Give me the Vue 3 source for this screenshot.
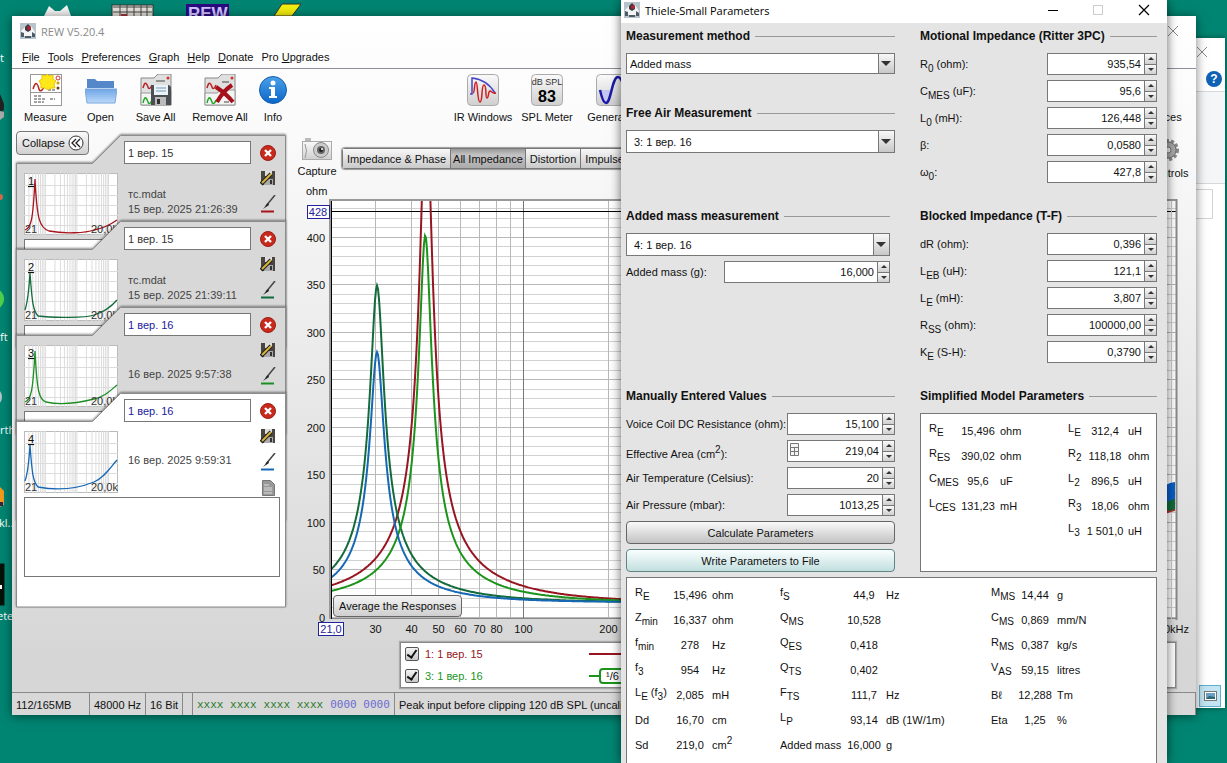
<template>
  <div class="desktop">
    <!-- Desktop shortcuts that peek out from behind the windows -->
    <svg class="shortcuts-top" width="320" height="16" aria-hidden="true">
      <path d="M44 16 L49 6 L55 11 L60 11 L67 5 L71 16 Z" fill="#f4f4f4" />
      <rect x="112" y="5" width="41" height="12" fill="#e4e0da" stroke="#333" />
      <path d="M113 7h39M113 12h39M120 5v11M127 5v11M134 5v11M141 5v11M147 5v11" stroke="#444" />
      <path d="M121 15h6" stroke="#a33" stroke-width="2" />
      <rect x="186" y="4" width="43" height="12" fill="#2b0a80" />
      <text x="188" y="19" class="rew-logo">REW</text>
      <path d="M282 4 L301 4 L292 16 L274 16 Z" fill="#f4ee10" stroke="#333" />
    </svg>
    <svg class="shortcuts-left" width="12" height="640" aria-hidden="true">
      <path d="M0 94v18l4-2v-6z" fill="#222" />
      <path d="M0 111l4 1v5l-4 3z" fill="#aaa" />
      <circle cx="0" cy="197" r="3" fill="#d2694a" />
      <circle cx="-7" cy="299" r="11" fill="#4fd04a" />
      <circle cx="-8" cy="397" r="10" fill="#b9c4c8" />
      <path d="M0 487l4 4v14l-4 2z" fill="#f49a1c" />
      <path d="M0 502h3v4h-3z" fill="#222a55" />
      <rect x="-2" y="564" width="6" height="41" fill="#061206" stroke="#111" />
      <rect x="0" y="585" width="2" height="4" fill="#fff" />
      <text x="0" y="62">t</text>
      <text x="0" y="341">ft</text>
      <text x="-6" y="434">arth</text>
      <text x="-1" y="527">kl...</text>
      <text x="-3" y="620">ete</text>
    </svg>

    <!-- Window at the very back -->
    <div class="back-window">
      <div class="back-title">
        <svg width="12" height="12"><path d="M1 1l10 10M11 1L1 11" stroke="#888" /></svg>
      </div>
      <div class="back-help">
        <svg width="16" height="16">
          <circle cx="8" cy="8" r="8" fill="#0f62b4" />
          <text x="8" y="12" text-anchor="middle" class="help-mark">?</text>
        </svg>
      </div>
      <div class="back-ribbon"></div>
      <div class="back-body"><div class="back-box"></div></div>
      <div class="back-view">
        <svg width="22" height="22">
          <rect x="0.5" y="0.5" width="21" height="21" fill="#c3e5f3" stroke="#5fb0cf" />
          <rect x="5.5" y="6.5" width="12" height="9" fill="#fff" stroke="#777" />
          <path d="M7 8h9v6H7z" fill="#6b9fc4" />
          <path d="M7 14l3-3 6 1v2z" fill="#2d6674" />
        </svg>
      </div>
    </div>

    <!-- REW main window -->
    <div class="rew">
      <div class="rew-title">
        <svg class="duke" width="16" height="16" viewBox="0 0 16 16"><path d="M0 0h16v16H0z" fill="#b8c4cc" /><path d="M1 8l5-5 5 0 4 6-1 4H2z" fill="#f4f4f4" /><path d="M5 4l3-3 3 3v3l-3 2-3-2z" fill="#363b42" /><circle cx="9" cy="5" r="2" fill="#b3232f" /><path d="M1 9l3 1v4H1zM12 9l3 2v3h-3zM5 13h6v2H5z" fill="#4d5b66" /></svg>
        <span>REW V5.20.4</span>
        <svg class="rew-close" width="12" height="12"><path d="M1 1l10 10M11 1L1 11" stroke="#888" /></svg>
      </div>

      <div class="menubar">
        <a v-for="item in menu" :key="item[1]" href="#">{{ item[0] }}<u>{{ item[1] }}</u>{{ item[2] }}</a>
      </div>

      <div class="toolbar">
        <button class="tool">
          <svg width="32" height="32">
            <rect x="0.5" y="0.5" width="31" height="18" fill="#fff" stroke="#999" />
            <rect x="0.5" y="18.500" width="31" height="13" fill="#fff" stroke="#999" />
            <path d="M3 15c3-10 5-4 6 0s4 1 6-4" fill="none" stroke="#b22" stroke-width="1.5" />
            <path d="M18 16h8M4 22h8M4 25h12M20 25h5M4 28h10" stroke="#444" stroke-dasharray="3 1" />
            <circle cx="28" cy="4" r="2" fill="none" stroke="#c33" /><circle cx="28" cy="9" r="1.5" fill="#c90" /><circle cx="28" cy="14" r="1.5" fill="#642" />
            <path d="M17 0l2 2 4-1 0 4 3 2-2 3 1 4-4 0-3 2-3-2-4 0 0-4-2-3 3-2 0-4 4 1z" fill="#ffe81a" stroke="#e8c400" />
          </svg>
          Measure
        </button>
        <button class="tool">
          <svg width="32" height="32">
            <defs><linearGradient id="folder" x2="0" y2="1"><stop stop-color="#6ea5e6" /><stop offset="1" stop-color="#bcd9f9" /></linearGradient></defs>
            <path d="M2 14V5h8l2 2h17v7z" fill="#5588c9" /><path d="M0 15h32l-2 14H2z" fill="url(#folder)" stroke="#7aa8e0" />
          </svg>
          Open
        </button>
        <button class="tool">
          <svg width="32" height="32">
            <path d="M1 4h13l4-4h13v31H1z" fill="#e0e0e0" stroke="#888" /><path d="M1 19h12l4-3h14v15H1z" fill="#f4f4f4" stroke="#999" />
            <path d="M3 14c2-8 4-4 5-1s3 1 4-2" fill="none" stroke="#b22" stroke-width="1.5" />
            <path d="M3 29c2-9 4-4 5-1s3 1 4-2" fill="none" stroke="#2a2" stroke-width="1.5" />
            <path d="M16 7h9" stroke="#444" /><circle cx="28" cy="4" r="1.5" fill="#c33" />
            <path d="M11 11h18l2 2v18H11z" fill="#4b4f55" /><path d="M14 11h14v10H14z" fill="#eaf2fa" /><path d="M16 14h10M16 17h10" stroke="#79a" /><path d="M15 23h11v8H15z" fill="#bbb" /><path d="M17 25h3v5h-3z" fill="#333" />
          </svg>
          Save All
        </button>
        <button class="tool">
          <svg width="32" height="32">
            <path d="M1 4h13l4-4h13v31H1z" fill="#e0e0e0" stroke="#888" /><path d="M1 19h12l4-3h14v15H1z" fill="#f4f4f4" stroke="#999" />
            <path d="M3 14c2-8 4-4 5-1s3 1 4-2" fill="none" stroke="#b22" stroke-width="1.5" />
            <path d="M3 29c2-9 4-4 5-1s3 1 4-2" fill="none" stroke="#2a2" stroke-width="1.5" />
            <path d="M18 8h7M20 28h5" stroke="#444" /><circle cx="28" cy="4" r="1.5" fill="#c33" />
            <path d="M12 13c6 4 12 9 17 15M28 11c-6 4-11 10-15 17" fill="none" stroke="#a5101a" stroke-width="4" />
          </svg>
          Remove All
        </button>
        <button class="tool">
          <svg width="32" height="32">
            <defs><linearGradient id="info" x2="0" y2="1"><stop stop-color="#4aa0e8" /><stop offset="1" stop-color="#0b66c8" /></linearGradient></defs>
            <circle cx="16" cy="16" r="13.5" fill="url(#info)" stroke="#1560ad" />
            <circle cx="16" cy="9" r="2.5" fill="#fff" /><path d="M12 13h6v9h2v2h-8v-2h2v-7h-2z" fill="#fff" />
          </svg>
          Info
        </button>
        <span></span>
        <button class="tool">
          <svg width="32" height="32">
            <rect x="0.5" y="0.5" width="31" height="31" rx="4" fill="url(#tile)" stroke="#aaa" />
            <path d="M3 20h2V4c10 1 17 5 23 15" fill="none" stroke="#4646c8" stroke-width="1.5" />
            <path d="M6 19c2 0 1-11 3-11s1 20 4 20 1-17 4-17 1 13 3 13 1-7 3-7 2 3 6 2" fill="none" stroke="#d01c1c" stroke-width="1.5" />
          </svg>
          IR Windows
        </button>
        <button class="tool">
          <svg width="32" height="32">
            <defs><linearGradient id="tile" x2="0" y2="1"><stop stop-color="#fafafa" /><stop offset="1" stop-color="#cfcfcf" /></linearGradient></defs>
            <rect x="0.5" y="0.5" width="31" height="31" rx="4" fill="url(#tile)" stroke="#aaa" />
            <text x="16" y="11" text-anchor="middle" class="spl-small">dB SPL</text>
            <text x="16" y="28" text-anchor="middle" class="spl-big">83</text>
          </svg>
          SPL Meter
        </button>
        <button class="tool">
          <svg width="32" height="32">
            <rect x="0.5" y="0.5" width="31" height="31" rx="4" fill="url(#tile)" stroke="#aaa" />
            <path d="M4 16h12c-2 8-4 13-6 13s-4-5-6-13z" fill="#c4c8f0" />
            <path d="M4 16c2 9 4 13 6 13 5 0 6-26 12-26 3 0 5 6 7 13" fill="none" stroke="#1a1aa8" stroke-width="2.5" />
          </svg>
          Generator
        </button>
        <span></span>
        <button class="tool">
          <svg width="32" height="32"><rect x="4" y="4" width="24" height="24" fill="#bbb" /></svg>
          Preferences
        </button>
      </div>

      <div class="workspace">
        <!-- Measurement list -->
        <aside class="sidebar">
          <button class="collapse">
            Collapse
            <svg width="16" height="16"><circle cx="8" cy="8" r="7" fill="#fff" stroke="#333" /><path d="M8 4L4 8l4 4M12 4L8 8l4 4" fill="none" stroke="#222" stroke-width="1.3" /></svg>
          </button>
          <div v-for="m in measurements" :key="m.id" class="card">
            <svg class="card-shape" width="270" height="215">
              <path d="M0.5 214V28.5H76.5L104.5 0.5H269.5V214Z" :fill="m.active ? '#ffffff' : '#d8d8d8'" stroke="#8c8c8c" />
            </svg>
            <div class="card-grid">
              <svg class="thumb" width="94" height="62">
                <rect x="0.5" y="0.5" width="93" height="61" fill="#fff" stroke="#bbb" />
                <path :d="thumbGrid" stroke="#dcdcdc" />
                <path :d="m.curve" fill="none" :stroke="m.color" stroke-width="1.3" />
                <text x="4" y="12" class="thumb-id">{{ m.id }}</text>
                <text x="1" y="60">21</text>
                <text x="67" y="60">20,0k</text>
              </svg>
              <div class="card-main">
                <input v-model="m.name" :class="{ blue: m.blue }" aria-label="Name" />
                <div class="card-info">
                  <span v-if="m.file">{{ m.file }}</span>
                  <span>{{ m.date }}</span>
                </div>
              </div>
              <div class="card-icons">
                <svg width="16" height="16"><circle cx="8" cy="8" r="7.5" fill="#c8291c" stroke="#9c2016" /><path d="M5 5l6 6M11 5l-6 6" stroke="#fff" stroke-width="2.4" /></svg>
                <svg width="16" height="16"><path d="M1 1h14v14H3l-2-2z" fill="#4a4540" /><path d="M5 1h7v5H5z" fill="#ddd" /><path d="M4 9h9v6H4z" fill="#aaa" /><path d="M10 10h2v4h-2z" fill="#333" /><path d="M1 14L11 4" stroke="#222" stroke-width="4" /><path d="M2 13L11 4" stroke="#d8b53a" stroke-width="2" /></svg>
                <svg width="16" height="18"><path d="M15 0L6 11" stroke="#444" stroke-width="1.5" /><path d="M8 8l-5 6 6-4z" fill="#222" /><path d="M1 16.500h13" :stroke="m.color" stroke-width="2" /></svg>
                <svg width="16" height="16"><path d="M2.500 0.500h8l4 4v11h-12z" fill="#999" stroke="#777" /><path d="M4 5h5M4 8h8M4 10h8M4 13h8" stroke="#ddd" /></svg>
              </div>
            </div>
            <textarea class="notes" aria-label="Notes"></textarea>
          </div>
        </aside>

        <main class="graph">
          <div class="graph-top">
            <button class="capture">
              <svg width="32" height="22">
                <rect x="1.500" y="3.500" width="29" height="18" fill="url(#tile)" stroke="#aaa" />
                <rect x="4" y="0" width="6" height="3" fill="#bbb" />
                <path d="M4 6q3 7 0 14" fill="none" stroke="#999" />
                <circle cx="20" cy="12" r="7.500" fill="#ccc" stroke="#888" /><circle cx="20" cy="12" r="4" fill="#666" /><circle cx="20" cy="12" r="2" fill="#222" /><circle cx="21" cy="11" r="1" fill="#fff" />
              </svg>
              Capture
            </button>
            <div class="tabs">
              <button v-for="t in tabs" :key="t" :class="{ on: t === currentTab }" @click="currentTab = t">{{ t }}</button>
            </div>
            <button class="capture controls">
              <svg width="24" height="24"><circle cx="12" cy="12" r="9" fill="#bbb" stroke="#888" stroke-width="4" stroke-dasharray="3 2" /><circle cx="12" cy="12" r="8" fill="#aaa" stroke="#777" /><circle cx="12" cy="12" r="3" fill="#eee" stroke="#777" /></svg>
              Controls
            </button>
          </div>

          <!-- Impedance chart, log frequency axis -->
          <div class="chart-wrap">
            <svg class="chart" width="100%" height="454">
              <text x="6" y="10">ohm</text>
              <svg x="31" y="16" height="418" class="plot">
                <rect width="100%" height="417" fill="#fff" />
                <line v-for="v in minorY" :key="'m' + v" x1="0" x2="100%" :y1="yPos(v)" :y2="yPos(v)" stroke="#d2d2d2" />
                <line v-for="v in majorY" :key="'y' + v" x1="0" x2="100%" :y1="yPos(v)" :y2="yPos(v)" stroke="#b8b8b8" />
                <line v-for="f in gridX" :key="'x' + f" :x1="xPos(f)" :x2="xPos(f)" y1="0" y2="417" :stroke="f === 100 ? '#777' : '#b8b8b8'" />
                <line x1="0" x2="100%" y1="10.500" y2="10.500" stroke="#000" />
                <path v-for="c in curves" :key="c.color" :d="c.path" fill="none" :stroke="c.color" stroke-width="2" />
                <rect y="417" width="100%" height="1" fill="#888" />
              </svg>
              <path d="M31.500 16V434" stroke="#000" stroke-width="1" />
              <path d="M30 14V434" stroke="#999" stroke-width="2" />
              <svg x="29" y="14" height="2" class="plot top-edge"><rect width="100%" height="2" fill="#999" /></svg>
              <svg x="100%" y="0" width="1" height="454" class="edge">
                <path d="M-24.500 16V434" stroke="#ccc" />
                <path d="M-36 322h15v4l-4 1-3 1-4 1-4-2z" fill="#c03028" />
                <path d="M-36 314h15v10l-4 2-5-1-6 1z" fill="#136b3c" />
                <path d="M-36 301l6-1 4-2 5-1v17l-4 1-4 2-7 1z" fill="#0a5ec8" />
                <path d="M-19.500 14V435" stroke="#888" stroke-width="2" />
                <text x="-7" y="448" text-anchor="end">20,0kHz</text>
              </svg>
              <text v-for="v in majorY" :key="'t' + v" x="25" :y="yPos(v) + 20" text-anchor="end">{{ v }}</text>
              <text v-for="f in labelsX" :key="'l' + f" :x="xPos(f) + 31" y="448" text-anchor="middle">{{ f }}</text>
              <rect x="7.500" y="20.500" width="22" height="13" fill="#fff" stroke="#22229a" />
              <text x="18" y="31" text-anchor="middle" class="marker">428</text>
              <rect x="18.500" y="437.500" width="25" height="13" fill="#fff" stroke="#22229a" />
              <text x="31" y="448" text-anchor="middle" class="marker">21,0</text>
            </svg>
            <button class="average">Average the Responses</button>
          </div>

          <div class="legend">
            <label class="red">
              <input v-model="shown" type="checkbox" value="1" />
              <span>1: 1 вер. 15</span>
              <svg width="60" height="20"><path d="M0 10h60" stroke="#961520" stroke-width="2" /></svg>
            </label>
            <label class="green">
              <input v-model="shown" type="checkbox" value="3" />
              <span>3: 1 вер. 16</span>
              <svg width="60" height="20"><path d="M0 10h12" stroke="#1c941c" stroke-width="2" /><rect x="11" y="3" width="40" height="14" rx="3" fill="#fff" stroke="#1c941c" stroke-width="2" /><text x="17" y="14" class="smooth">¹/6</text></svg>
            </label>
          </div>
        </main>
      </div>

      <footer class="status">
        <span>112/165MB</span>
        <span>48000 Hz</span>
        <span>16 Bit</span>
        <span></span>
        <span class="bits"><i>xxxx xxxx</i><i>xxxx xxxx</i><b>0000 0000</b></span>
        <span>Peak input before clipping 120 dB SPL (uncalibrated)</span>
      </footer>
    </div>

    <!-- Thiele-Small dialog -->
    <div class="dialog">
      <div class="dialog-title">
        <svg class="duke" width="16" height="16" viewBox="0 0 16 16"><path d="M0 0h16v16H0z" fill="#b8c4cc" /><path d="M1 8l5-5 5 0 4 6-1 4H2z" fill="#f4f4f4" /><path d="M5 4l3-3 3 3v3l-3 2-3-2z" fill="#363b42" /><circle cx="9" cy="5" r="2" fill="#b3232f" /><path d="M1 9l3 1v4H1zM12 9l3 2v3h-3zM5 13h6v2H5z" fill="#4d5b66" /></svg>
        <span>Thiele-Small Parameters</span>
        <svg class="dialog-buttons" width="102" height="12">
          <path d="M0 6.500h10" stroke="#000" /><rect x="45.500" y="1.500" width="9" height="9" fill="none" stroke="#ccc" /><path d="M91 1l10 10M101 1L91 11" stroke="#000" stroke-width="1.200" />
        </svg>
      </div>

      <div class="params">
        <section>
          <h2>Measurement method</h2>
          <div class="combo">
            <select aria-label="Measurement method"><option>Added mass</option></select>
          </div>
          <h2 class="second">Free Air Measurement</h2>
          <div class="combo tall">
            <select aria-label="Free Air Measurement"><option>3: 1 вер. 16</option></select>
          </div>
        </section>

        <section>
          <h2>Motional Impedance (Ritter 3PC)</h2>
          <div v-for="(f, i) in motional" :key="i" class="field">
            <label :for="'mot' + i">{{ f.name }}<sub>{{ f.sub }}</sub>{{ f.unit }}</label>
            <div class="spinner">
              <input :id="'mot' + i" v-model="f.value" />
              <span class="steps"><button aria-label="Up"></button><button aria-label="Down" class="down"></button></span>
            </div>
          </div>
        </section>

        <section class="added">
          <h2>Added mass measurement</h2>
          <div class="combo tall">
            <select aria-label="Added mass measurement"><option>4: 1 вер. 16</option></select>
          </div>
          <div class="field">
            <label for="mass">Added mass (g):</label>
            <div class="spinner wide">
              <input id="mass" v-model="addedMass" />
              <span class="steps"><button aria-label="Up"></button><button aria-label="Down" class="down"></button></span>
            </div>
          </div>
        </section>

        <section>
          <h2>Blocked Impedance (T-F)</h2>
          <div v-for="(f, i) in blocked" :key="i" class="field">
            <label :for="'blk' + i">{{ f.name }}<sub>{{ f.sub }}</sub>{{ f.unit }}</label>
            <div class="spinner">
              <input :id="'blk' + i" v-model="f.value" />
              <span class="steps"><button aria-label="Up"></button><button aria-label="Down" class="down"></button></span>
            </div>
          </div>
        </section>

        <section>
          <h2>Manually Entered Values</h2>
          <div v-for="(f, i) in manual" :key="i" class="field">
            <label :for="'man' + i" :class="{ raised: f.sup }">{{ f.name }}<sup v-if="f.sup">{{ f.sup }}</sup>{{ f.unit }}</label>
            <div class="spinner narrow">
              <svg v-if="f.calc" class="calc" width="10" height="14"><path d="M0.500 0.500h8v12h-8zM0.500 4.500h8M0.500 8.500h8M4.500 4.500v8" fill="#f4f4f4" stroke="#777" /></svg>
              <input :id="'man' + i" v-model="f.value" />
              <span class="steps"><button aria-label="Up"></button><button aria-label="Down" class="down"></button></span>
            </div>
          </div>
          <button class="action">Calculate Parameters</button>
          <button class="action write">Write Parameters to File</button>
        </section>

        <section class="simple">
          <h2>Simplified Model Parameters</h2>
          <div class="panel">
            <table>
              <colgroup><col class="w27" /><col class="w44" /><col class="w68" /><col class="w14" /><col class="w46" /><col /></colgroup>
              <tbody>
                <tr v-for="(row, r) in simplified" :key="r">
                  <template v-for="(c, i) in row" :key="i">
                    <td class="symbol">{{ c[0] }}<sub>{{ c[1] }}</sub></td>
                    <td class="num">{{ c[2] }}</td>
                    <td>{{ c[3] }}</td>
                  </template>
                </tr>
              </tbody>
            </table>
          </div>
        </section>
      </div>

      <div class="panel results">
        <table>
          <colgroup><col class="w33" /><col class="w44" /><col class="w68" /><col class="w62" /><col class="w44" /><col class="w105" /><col class="w22" /><col class="w44" /><col /></colgroup>
          <tbody>
            <tr v-for="(row, r) in results" :key="r">
              <template v-for="(c, i) in row" :key="i">
                <td :class="{ symbol: c[1] }">{{ c[0] }}<sub v-if="c[1]">{{ c[1] }}</sub><template v-if="c[4]"> ({{ c[4] }}<sub>3</sub>)</template></td>
                <td class="num">{{ c[2] }}</td>
                <td>{{ c[3] }}<sup v-if="c[5]">{{ c[5] }}</sup></td>
              </template>
            </tr>
          </tbody>
        </table>
      </div>
    </div>
  </div>
</template>

<script setup>
import { ref } from 'vue'

const menu = [
  ['', 'F', 'ile'], ['', 'T', 'ools'], ['', 'P', 'references'], ['', 'G', 'raph'],
  ['', 'H', 'elp'], ['', 'D', 'onate'], ['Pro ', 'U', 'pgrades']
]

const tabs = ['Impedance & Phase', 'All Impedance', 'Distortion', 'Impulse', 'Group Delay']
const currentTab = ref('All Impedance')
const shown = ref(['1', '3'])
const addedMass = ref('16,000')

const measurements = ref([
  { id: 1, name: '1 вер. 15', file: 'тс.mdat', date: '15 вер. 2025 21:26:39', color: '#a8141c', curve: 'M1 57C7 55 9 48 11 6C13 48 16 55 25 58C40 61 62 60 70 57C80 55 86 52 93 47' },
  { id: 2, name: '1 вер. 15', file: 'тс.mdat', date: '15 вер. 2025 21:39:11', color: '#116b3a', curve: 'M1 51C4 42 5 30 6 14C8 42 9 52 14 57C28 59 62 59 70 56C80 53 87 48 93 41' },
  { id: 3, name: '1 вер. 16', blue: true, date: '16 вер. 2025 9:57:38', color: '#1b8f22', curve: 'M1 57C7 55 9 46 11 6C13 46 15 55 22 57C40 61 62 56 70 54C80 52 86 46 93 40' },
  { id: 4, name: '1 вер. 16', blue: true, active: true, date: '16 вер. 2025 9:59:31', color: '#1668b4', curve: 'M1 50C4 42 5 30 6 14C8 42 9 51 14 56C30 59 50 59 70 51C80 47 86 37 93 29' }
])

// Log frequency lines of the thumbnails, 21 Hz - 20 kHz over 94 px
let grid = 'M0 12.500h94M0 22.500h94M0 32.500h94M0 42.500h94M0 52.500h94'
for (let d = 10; d < 20000; d *= 10) {
  for (let n = 1; n < 10; n++) {
    const f = d * n
    if (f > 21 && f < 20000) grid += `M${(Math.log10(f / 21) / Math.log10(20000 / 21) * 94).toFixed(1)} 0V62`
  }
}
const thumbGrid = grid

// Chart axes
const xPos = f => Math.round(282.4 * Math.log10(f / 100) + 192) + 0.5
const yPos = v => Math.round(417 - v * 0.951) - 0.5
const majorY = [0, 50, 100, 150, 200, 250, 300, 350, 400]
const minorY = Array.from({ length: 44 }, (_, i) => i * 10).filter(v => v % 50)
const gridX = [30, 40, 50, 60, 70, 80, 90, 100, 200, 300, 400, 500]
const labelsX = [30, 40, 50, 60, 70, 80, 100, 200]

// |Re + Rm / (1 + jQx)| of a driver around its resonance
function impedance(fs, rm, q) {
  let path = ''
  for (let px = 0; px <= 420; px++) {
    const f = 100 * Math.pow(10, (px - 192.5) / 282.4)
    const k = q * (f / fs - fs / f)
    const re = 16.5 + rm / (1 + k * k)
    const im = rm * k / (1 + k * k)
    path += `${px ? 'L' : 'M'}${px} ${(417 - Math.sqrt(re * re + im * im) * 0.951).toFixed(1)}`
  }
  return path
}

const curves = [
  { color: '#961520', path: impedance(45.2, 530, 10.6) },
  { color: '#136b3c', path: impedance(30.3, 333, 9.3) },
  { color: '#1c941c', path: impedance(44.9, 386, 10.2) },
  { color: '#1668b4', path: impedance(30.3, 263, 9.2) }
]

const motional = ref([
  { name: 'R', sub: '0', unit: ' (ohm):', value: '935,54' },
  { name: 'C', sub: 'MES', unit: ' (uF):', value: '95,6' },
  { name: 'L', sub: '0', unit: ' (mH):', value: '126,448' },
  { name: 'β:', sub: '', unit: '', value: '0,0580' },
  { name: 'ω', sub: '0', unit: ':', value: '427,8' }
])

const blocked = ref([
  { name: 'dR (ohm):', sub: '', unit: '', value: '0,396' },
  { name: 'L', sub: 'EB', unit: ' (uH):', value: '121,1' },
  { name: 'L', sub: 'E', unit: ' (mH):', value: '3,807' },
  { name: 'R', sub: 'SS', unit: ' (ohm):', value: '100000,00' },
  { name: 'K', sub: 'E', unit: ' (S-H):', value: '0,3790' }
])

const manual = ref([
  { name: 'Voice Coil DC Resistance (ohm):', value: '15,100' },
  { name: 'Effective Area (cm', sup: '2', unit: '):', value: '219,04', calc: true },
  { name: 'Air Temperature (Celsius):', value: '20' },
  { name: 'Air Pressure (mbar):', value: '1013,25' }
])

// [symbol, subscript, value, unit]
const simplified = [
  [['R', 'E', '15,496', 'ohm'], ['L', 'E', '312,4', 'uH']],
  [['R', 'ES', '390,02', 'ohm'], ['R', '2', '118,18', 'ohm']],
  [['C', 'MES', '95,6', 'uF'], ['L', '2', '896,5', 'uH']],
  [['L', 'CES', '131,23', 'mH'], ['R', '3', '18,06', 'ohm']],
  [['', '', '', ''], ['L', '3', '1 501,0', 'uH']]
]

const results = [
  [['R', 'E', '15,496', 'ohm'], ['f', 'S', '44,9', 'Hz'], ['M', 'MS', '14,44', 'g']],
  [['Z', 'min', '16,337', 'ohm'], ['Q', 'MS', '10,528', ''], ['C', 'MS', '0,869', 'mm/N']],
  [['f', 'min', '278', 'Hz'], ['Q', 'ES', '0,418', ''], ['R', 'MS', '0,387', 'kg/s']],
  [['f', '3', '954', 'Hz'], ['Q', 'TS', '0,402', ''], ['V', 'AS', '59,15', 'litres']],
  [['L', 'E', '2,085', 'mH', 'f'], ['F', 'TS', '111,7', 'Hz'], ['Bℓ', '', '12,288', 'Tm']],
  [['Dd', '', '16,70', 'cm'], ['L', 'P', '93,14', 'dB (1W/1m)'], ['Eta', '', '1,25', '%']],
  [['Sd', '', '219,0', 'cm', '', '2'], ['Added mass', '', '16,000', 'g']]
]
</script>

<style>
body {
  margin: 0;
  background: #008572;
}
</style>

<style scoped>
.desktop {
  position: relative;
  height: 100vh;
  min-height: 720px;
  overflow: hidden;
  background: #008572;
  font: 11px/14px "Liberation Sans", Arial, sans-serif;
  color: #111;
}

.desktop * {
  box-sizing: border-box;
}

button, input, select, textarea {
  font: inherit;
  color: inherit;
  margin: 0;
}

svg {
  display: block;
  flex: none;
}

.shortcuts-top, .shortcuts-left {
  position: absolute;
  top: 0;
  left: 0;
}

.shortcuts-left text {
  font: 11px "Open Sans", sans-serif;
  fill: #fff;
}

.rew-logo {
  font: bold 17px "Liberation Sans", sans-serif;
  fill: #cfc4ff;
}

/* back window */
.back-window {
  position: absolute;
  top: 38px;
  right: 2px;
  width: 70px;
  background: #fff;
  box-shadow: 0 0 6px rgba(0, 0, 0, 0.4);
}

.back-title {
  height: 30px;
  padding: 8px 0 0 41px;
}

.back-help {
  height: 24px;
  padding: 3px 0 0 51px;
  border-bottom: 1px solid #d8d8d8;
}

.help-mark {
  font: bold 12px "Liberation Sans", sans-serif;
  fill: #fff;
}

.back-ribbon {
  height: 92px;
  background: #f4f6f7;
  border-bottom: 1px solid #d8d8d8;
}

.back-body {
  height: 501px;
  padding-top: 5px;
}

.back-box {
  width: 58px;
  height: 30px;
  border: 1px solid #d4d4d4;
}

.back-view {
  height: 23px;
  padding-left: 44px;
}

/* main window */
.rew {
  position: absolute;
  top: 16px;
  left: 12px;
  right: 31px;
  background: linear-gradient(#fff 0, #fafafa 120px, #d6d6d6 640px, #d6d6d6 100%);
  box-shadow: 0 1px 10px rgba(0, 0, 0, 0.5);
}

.rew-title {
  display: flex;
  align-items: center;
  height: 30px;
  padding: 0 17px 0 8px;
  gap: 5px;
  font: 11px "Open Sans", sans-serif;
  color: #8a8a8a;
}

.rew-close {
  margin-left: auto;
}

.menubar {
  display: flex;
  gap: 8px;
  height: 23px;
  padding: 4px 10px 0;
  border-bottom: 1px solid #8e8e98;
}

.menubar a {
  color: #111;
  text-decoration: none;
}

.toolbar {
  display: grid;
  grid-template-columns: 55px 55px 55px 74px 32px 161px 66px 62px 68px 1fr 64px;
  height: 62px;
  padding: 5px 12px 0 6px;
}

.tool, .capture {
  display: flex;
  flex-direction: column;
  align-items: center;
  gap: 4px;
  padding: 0;
  border: 0;
  background: none;
  white-space: nowrap;
}

.spl-small {
  font: 9px "Liberation Sans", sans-serif;
  fill: #333;
}

.spl-big {
  font: bold 16px "Liberation Sans", sans-serif;
}

.workspace {
  display: flex;
  height: 561px;
}

/* sidebar */
.sidebar {
  width: 270px;
  margin-left: 4px;
}

.collapse {
  position: relative;
  z-index: 1;
  display: flex;
  align-items: center;
  justify-content: space-between;
  width: 73px;
  height: 24px;
  padding: 0 4px 0 5px;
  border: 1px solid #777;
  border-radius: 4px;
  background: linear-gradient(#fafafa, #d0d0d0);
}

.card {
  position: relative;
  height: 214px;
  padding: 6px 6px 0 8px;
  margin-top: -128px;
}

.collapse + .card {
  margin-top: -20px;
}

.card-shape {
  position: absolute;
  top: 0;
  left: 0;
  filter: drop-shadow(0 -1px 1px rgba(0, 0, 0, 0.45));
}

.card-grid {
  position: relative;
  display: grid;
  grid-template-columns: 94px 127px 24px;
  column-gap: 6px;
  height: 98px;
}

.thumb {
  margin-top: 32px;
}

.thumb text {
  fill: #333;
}

.thumb .thumb-id {
  fill: #111;
  text-decoration: underline;
}

.card-main {
  white-space: nowrap;
}

.card-main input {
  display: block;
  width: 127px;
  height: 23px;
  padding: 0 3px;
  border: 1px solid #777;
  background: #fff;
  color: #333;
}

.card-main input.blue {
  color: #1a1aa0;
}

.card-info {
  display: flex;
  flex-direction: column;
  justify-content: center;
  height: 76px;
  padding-left: 4px;
  line-height: 15px;
  color: #444;
}

.card-icons {
  display: flex;
  flex-direction: column;
  align-items: center;
  gap: 9px;
  padding: 4px 2px 0 0;
}

.notes {
  position: relative;
  display: block;
  width: 256px;
  height: 80px;
  border: 1px solid #777;
  background: #fff;
  resize: none;
}

/* graph */
.graph {
  flex: 1;
  min-width: 0;
  padding-left: 14px;
}

.graph-top {
  display: flex;
  height: 54px;
  padding-right: 8px;
}

.capture {
  width: 34px;
  height: 48px;
  padding-top: 7px;
}

.controls {
  width: 40px;
  margin-left: auto;
}

.tabs {
  display: flex;
  height: 21px;
  margin: 17px 0 0 8px;
  border: 1px solid #777;
  border-radius: 3px;
  box-shadow: 0 0 1px 1px #999;
}

.tabs button {
  padding: 0 4px;
  border: 0;
  border-right: 1px solid #777;
  background: linear-gradient(#f8f8f8, #cacaca);
  white-space: nowrap;
}

.tabs button.on {
  padding: 0 2px;
  background: linear-gradient(#999, #c4c4c4 6px, #ababab);
}

.chart-wrap {
  position: relative;
}

.plot {
  width: calc(100% - 51px);
}

.plot.top-edge {
  width: calc(100% - 48px);
}

.chart text {
  fill: #111;
}

.chart .marker {
  fill: #22229a;
}

.edge {
  overflow: visible;
}

.average {
  position: absolute;
  left: 33px;
  bottom: 22px;
  height: 22px;
  padding: 0 5px;
  border: 1px solid #666;
  border-radius: 4px;
  background: linear-gradient(#f4f4f4, #cfcfcf);
}

.legend {
  margin: 3px 20px 0 100px;
  padding: 0 4px;
  background: #fff;
  border: 1px solid #888;
  box-shadow: 0 0 1px 1px #aaa;
}

.legend label {
  display: grid;
  grid-template-columns: 14px 158px 60px;
  gap: 6px;
  align-items: center;
  height: 22px;
}

.legend input {
  appearance: none;
  display: grid;
  place-items: center;
  width: 14px;
  height: 14px;
  border: 1px solid #555;
  border-radius: 2px;
  background: linear-gradient(#f4f4f4, #c8c8c8);
}

.legend input:checked::after {
  content: "";
  width: 4px;
  height: 8px;
  margin-bottom: 2px;
  border: solid #111;
  border-width: 0 2px 2px 0;
  transform: rotate(35deg);
}

.red {
  color: #961520;
}

.green {
  color: #1c941c;
}

.smooth {
  fill: #111;
}

.status {
  display: grid;
  grid-template-columns: 78px 56px 37px 10px 202px 1fr;
  height: 23px;
  border-top: 1px solid #888;
  background: #d8d8d8;
}

.status > span {
  padding: 5px 3px 0 4px;
  border-right: 1px solid #888;
  white-space: nowrap;
  overflow: hidden;
}

.bits {
  display: flex;
  gap: 7px;
  font: 11px/14px "DejaVu Sans Mono", monospace;
}

.bits i {
  font-style: normal;
  color: #2b7a2b;
}

.bits b {
  font-weight: normal;
  color: #6d6dd0;
}

/* dialog */
.dialog {
  position: absolute;
  top: 0;
  bottom: 0;
  left: 621px;
  right: 60px;
  display: flex;
  flex-direction: column;
  overflow: hidden;
  background: #e4e4e4;
  box-shadow: 0 0 10px rgba(0, 0, 0, 0.6);
}

.dialog-title {
  display: flex;
  align-items: center;
  gap: 5px;
  height: 23px;
  padding: 0 17px 3px 3px;
  background: #fff;
  font: 11px "Open Sans", sans-serif;
  color: #000;
}

.dialog-buttons {
  margin-left: auto;
}

.params {
  display: grid;
  grid-template-columns: 269px 1fr;
  grid-template-rows: 180px 180px auto;
  column-gap: 25px;
  padding: 4px 10px 5px 5px;
}

h2 {
  display: flex;
  align-items: center;
  gap: 5px;
  height: 18px;
  margin: 0 0 8px;
  font-size: 12px;
  font-weight: bold;
  white-space: nowrap;
}

h2::after {
  content: "";
  flex: 1;
  height: 1px;
  background: #999;
}

h2.second {
  margin-top: 30px;
}

.combo {
  position: relative;
  height: 21px;
}

.combo.tall {
  height: 23px;
}

.combo select {
  appearance: none;
  width: 100%;
  height: 100%;
  padding: 0 20px 0 3px;
  border: 1px solid #777;
  border-radius: 0;
  background: linear-gradient(#777, #777) right 15px top 0 / 1px 100% no-repeat, linear-gradient(#f8f8f8, #c8c8c8) right / 15px 100% no-repeat, #fff;
}

.combo.tall select {
  padding-left: 7px;
}

.combo::after {
  content: "";
  position: absolute;
  top: 8px;
  right: 4px;
  border: 5px solid transparent;
  border-top-color: #333;
  border-bottom: 0;
}

.combo.tall::after {
  top: 9px;
}

.added {
  padding-right: 5px;
}

.field {
  display: flex;
  align-items: center;
  justify-content: space-between;
  height: 22px;
  margin-bottom: 5px;
}

.added .combo {
  margin-bottom: 5px;
}

.field label {
  white-space: nowrap;
}

.field label.raised {
  padding-top: 5px;
}

sub, sup {
  font-size: 10px;
  line-height: 0;
  vertical-align: -4px;
}

sup {
  vertical-align: 5px;
}

.spinner {
  position: relative;
  display: flex;
  width: 110px;
  height: 22px;
  border: 1px solid #777;
  background: #fff;
}

.spinner.narrow {
  width: 108px;
}

.spinner.wide {
  width: 166px;
}

.spinner input {
  flex: 1;
  min-width: 0;
  padding: 0 3px;
  border: 0;
  background: none;
  text-align: right;
}

.calc {
  margin: 2px 0 0 2px;
}

.steps {
  display: grid;
  width: 12px;
  border-left: 1px solid #777;
}

.steps button {
  display: grid;
  place-items: center;
  padding: 0;
  border: 0;
  background: linear-gradient(#fafafa, #cfcfcf);
}

.steps .down {
  border-top: 1px solid #777;
}

.steps button::after {
  content: "";
  border: 3px solid transparent;
  border-top: 0;
  border-bottom-color: #333;
}

.steps .down::after {
  border: 3px solid transparent;
  border-bottom: 0;
  border-top-color: #333;
}

.action {
  display: block;
  width: 100%;
  height: 23px;
  margin-bottom: 5px;
  border: 1px solid #666;
  border-radius: 4px;
  background: linear-gradient(#fafafa, #c2c2c2);
}

.action.write {
  margin-bottom: 0;
  border-color: #5f8585;
  background: linear-gradient(#fafefe, #c2dfdf);
}

.simple {
  display: flex;
  flex-direction: column;
}

.panel {
  flex: 1;
  padding: 4px 0 0 8px;
  border: 1px solid #777;
  background: #fff;
}

.results {
  margin: 0 10px 0 5px;
  border-bottom: 0;
}

table {
  width: 100%;
  table-layout: fixed;
  border-collapse: collapse;
}

td {
  height: 25px;
  padding: 0;
  white-space: nowrap;
}

td.num {
  text-align: center;
}

td.symbol {
  padding-bottom: 6px;
}

.w14 { width: 14px; }
.w22 { width: 22px; }
.w27 { width: 27px; }
.w33 { width: 33px; }
.w44 { width: 44px; }
.w46 { width: 46px; }
.w62 { width: 62px; }
.w68 { width: 68px; }
.w105 { width: 105px; }
</style>
